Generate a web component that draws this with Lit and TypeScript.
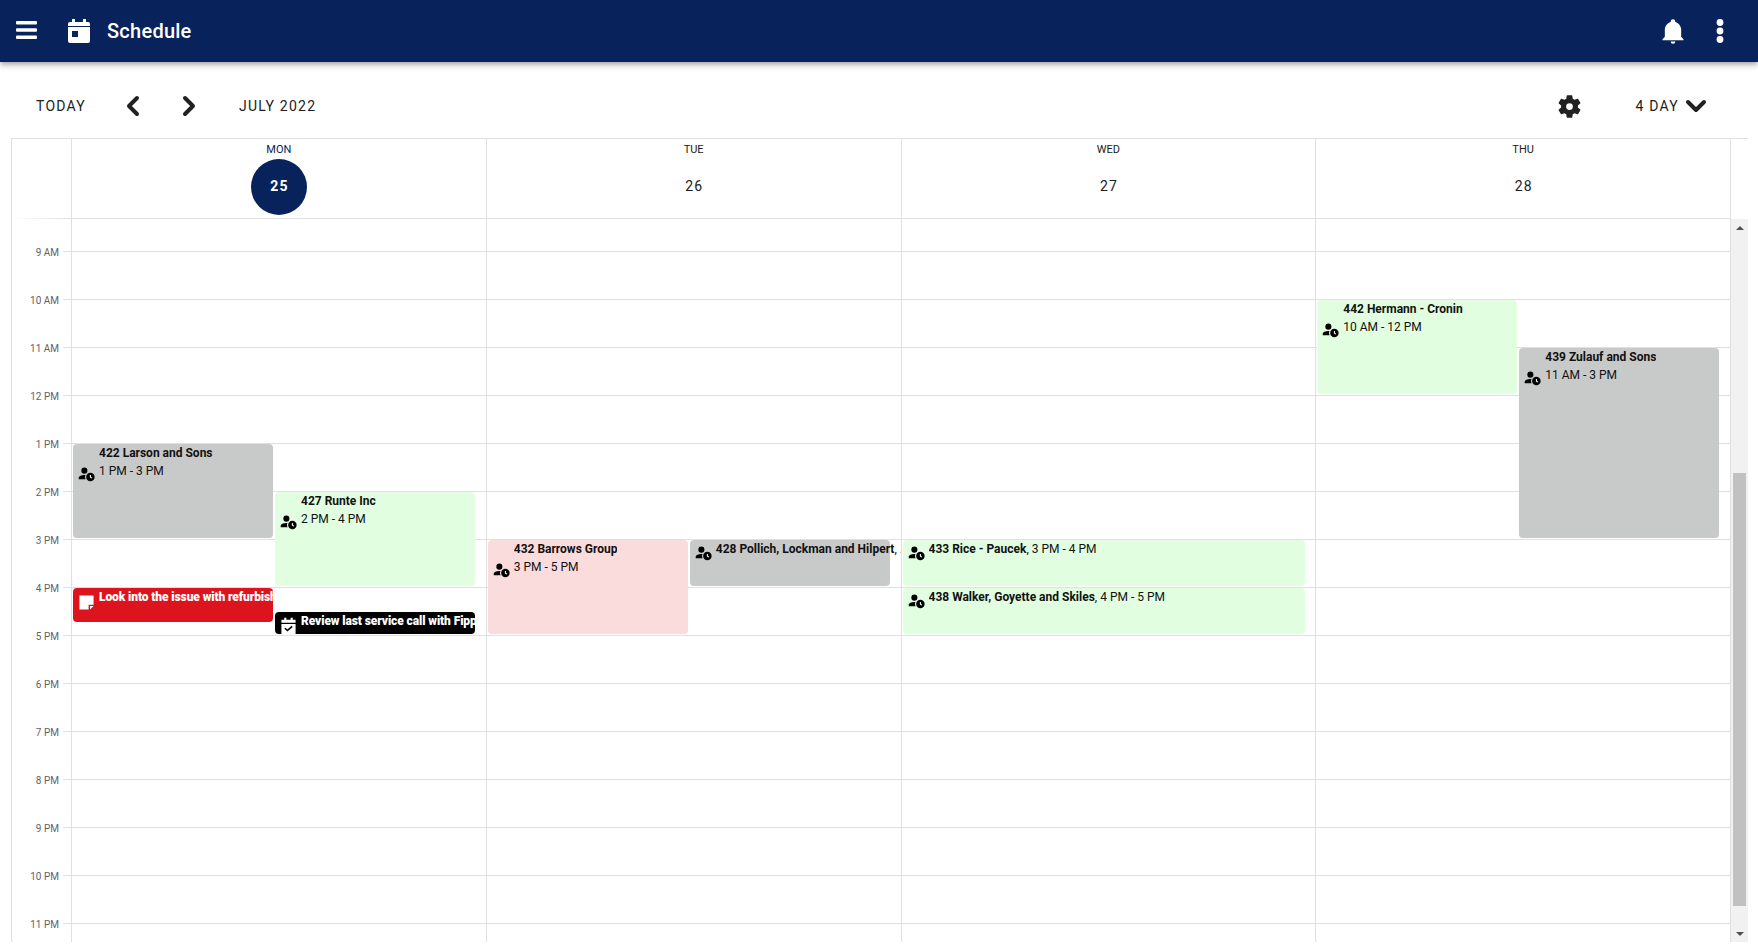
import { LitElement, html, css, svg } from "lit";
import { customElement } from "lit/decorators.js";

const ICONS = {
  person: svg`<circle cx="9" cy="8" r="4.3"/><path d="M1,20V18C1.06,16.86 1.84,15.93 3.34,15.18C4.84,14.43 6.72,14.04 9,14C9.57,14 10.11,14.05 10.63,14.1C9.8,15.5 9.6,18 10.67,20Z"/><circle cx="17.5" cy="17" r="6"/><path d="M17.5,14V17.2L19.8,18.5" fill="none" stroke="#fff" stroke-width="1.5"/>`,
  note: svg`<path d="M2,2H22V15H15V22H2ZM17,17H22L17,22Z"/>`,
  check: svg`<path d="M6,1H9V4H15V1H18V4H22V8H2V4H6ZM2,10H22V24H2ZM10.5,20.5L18,14L16.3,12.5L10.5,17.5L7.7,15L6,16.5Z" fill-rule="evenodd"/>`,
};

type Ev = { col: number; lane: number; top: number; h: number; kind: string; icon: keyof typeof ICONS; title: string; time?: string; inline?: boolean; wide?: boolean };

const EVENTS: Ev[] = [
  { col: 0, lane: 0, top: 225, h: 94, kind: "grey", icon: "person", title: "422 Larson and Sons", time: "1 PM - 3 PM" },
  { col: 0, lane: 1, top: 273, h: 94, kind: "green", icon: "person", title: "427 Runte Inc", time: "2 PM - 4 PM" },
  { col: 0, lane: 0, top: 369, h: 34, kind: "red", icon: "note", title: "Look into the issue with refurbished unit" },
  { col: 0, lane: 1, top: 393, h: 22, kind: "black", icon: "check", title: "Review last service call with Fippin and Sons" },
  { col: 1, lane: 0, top: 321, h: 94, kind: "pink", icon: "person", title: "432 Barrows Group", time: "3 PM - 5 PM" },
  { col: 1, lane: 1, top: 321, h: 46, kind: "grey spill", icon: "person", title: "428 Pollich, Lockman and Hilpert", time: "...", inline: true },
  { col: 2, lane: 0, top: 321, h: 46, kind: "green", icon: "person", title: "433 Rice - Paucek", time: "3 PM - 4 PM", inline: true, wide: true },
  { col: 2, lane: 0, top: 369, h: 46, kind: "green", icon: "person", title: "438 Walker, Goyette and Skiles", time: "4 PM - 5 PM", inline: true, wide: true },
  { col: 3, lane: 0, top: 81, h: 94, kind: "green", icon: "person", title: "442 Hermann - Cronin", time: "10 AM - 12 PM" },
  { col: 3, lane: 1, top: 129, h: 190, kind: "grey", icon: "person", title: "439 Zulauf and Sons", time: "11 AM - 3 PM" },
];

const HOURS = ["9 AM", "10 AM", "11 AM", "12 PM", "1 PM", "2 PM", "3 PM", "4 PM", "5 PM", "6 PM", "7 PM", "8 PM", "9 PM", "10 PM", "11 PM"];
const DAYS = [["MON", "25"], ["TUE", "26"], ["WED", "27"], ["THU", "28"]];

@customElement("app-root")
export class AppRoot extends LitElement {
  static styles = css`
    :host { display: flex; flex-direction: column; height: 951px; overflow: hidden; background: #fff; font-family: Roboto, "Liberation Sans", sans-serif; color: #212121; }
    svg { display: block; fill: currentColor; }
    .appbar { flex: none; height: 62px; background: #08235b; color: #fff; display: flex; align-items: center; padding: 0 0 0 16px; box-shadow: 0 2px 4px -1px rgba(0,0,0,.2), 0 4px 5px rgba(0,0,0,.14), 0 1px 10px rgba(0,0,0,.12); position: relative; z-index: 2; }
    .burger { margin-top: -2px; }
    .title { font-size: 20px; font-weight: 500; letter-spacing: .25px; margin-left: 17px; line-height: 24px; margin-top: -1px; }
    .cal-ic { margin-left: 31px; }
    .spacer { flex: 1; }
    .bell { margin-right: 29px; }
    .dots { margin-right: 34px; }
    .toolbar { flex: none; height: 76px; box-sizing: border-box; padding: 12px 0 0 36px; display: flex; align-items: center; font-size: 14px; letter-spacing: 1.25px; }
    .toolbar .prev { margin-left: 39px; }
    .toolbar .next { margin-left: 40px; }
    .toolbar .month { margin-left: 42px; }
    .toolbar .gear { margin-right: 52px; }
    .toolbar .view { margin-right: 6px; }
    .toolbar .down { margin-right: 51px; }
    .calendar { flex: none; height: 803px; margin: 0 10px 0 11px; border-top: 1px solid #e0e0e0; display: flex; flex-direction: column; }
    .head { flex: none; height: 80px; display: flex; }
    .gutter { flex: none; width: 61px; box-sizing: border-box; border-left: 1px solid #e0e0e0; border-right: 1px solid #e0e0e0; }
    .head .gutter { background: linear-gradient(90deg, #fff, #e0e0e0) bottom / 100% 1px no-repeat; }
    .hcol { flex: 1; min-width: 0; box-sizing: border-box; border-right: 1px solid #e0e0e0; border-bottom: 1px solid #e0e0e0; display: flex; flex-direction: column; align-items: center; }
    .wd { font-size: 11px; line-height: 12px; margin-top: 5px; color: #212121; }
    .today .wd { color: #08235b; }
    .num { width: 56px; height: 56px; box-sizing: border-box; padding: 0 0 2px 1.25px; margin-top: 3px; border-radius: 50%; display: flex; align-items: center; justify-content: center; font-size: 14px; letter-spacing: 1.25px; line-height: 20px; }
    .today .num { background: #08235b; color: #fff; font-weight: 700; }
    .sb-pad { flex: none; width: 17px; }
    .body { flex: 1; min-height: 0; display: flex; }
    .gut-body { padding-top: 32px; overflow: hidden; }
    .label { display: flow-root; height: 48px; position: relative; font-size: 10px; color: #5f6368; line-height: 12px; }
    .label span { display: block; text-align: right; padding-right: 12px; margin-top: -4px; }
    .label::after { content: ""; position: absolute; right: 0; top: 0; width: 8px; height: 1px; background: #e0e0e0; }
    .col { flex: 1; min-width: 0; box-sizing: border-box; border-right: 1px solid #e0e0e0; position: relative; overflow: hidden; padding-top: 32px; }
    .line { height: 48px; box-sizing: border-box; border-top: 1px solid #e0e0e0; }
    .event { position: absolute; box-sizing: border-box; border-radius: 4px; display: flex; font-size: 12px; line-height: 18px; padding-left: 5px; overflow: hidden; color: #111; white-space: nowrap; }
    .event.spill { overflow: visible; }
    .grey { background: #c8c9c9; }
    .green { background: #e1ffe0; }
    .pink { background: #fbdcdd; }
    .red { background: #dd141d; color: #fff; }
    .black { background: #000; color: #fff; }
    .ev-ic { flex: none; width: 17px; height: 17px; margin-right: 4px; margin-top: 4px; color: #000; }
    .red .ev-ic, .black .ev-ic { color: #fff; }
    .red .ev-ic { margin-top: 6px; }
    .black .ev-ic { margin-top: 5px; }
    .two .ev-ic { margin-top: 21px; }
    .txt { min-width: 0; overflow: hidden; }
    .spill .txt { overflow: visible; }
    .t { font-weight: 700; }
    .red .t, .black .t { font-weight: 900; letter-spacing: -0.1px; }
    .scrollbar { flex: none; width: 17px; background: #f1f1f1; display: flex; flex-direction: column; align-items: center; box-sizing: border-box; padding: 0 2px; }
    .arrow { flex: none; height: 17px; display: flex; align-items: center; justify-content: center; color: #505050; }
    .track { flex: 1; align-self: stretch; }
    .thumb { margin-top: 237px; height: 433px; background: #c1c1c1; }
  `;

  private renderEvent(e: Ev) {
    const left = e.lane ? 203 : 1;
    const width = e.wide ? 402 : 200;
    const style = `left:${left}px;width:${width}px;top:${e.top}px;height:${e.h}px`;
    const two = e.time && !e.inline;
    return html`<div class="event ${e.kind} ${two ? "two" : ""}" style=${style}>
      <svg class="ev-ic" viewBox="0 0 24 24">${ICONS[e.icon]}</svg>
      <div class="txt">
        ${e.inline
          ? html`<span class="t">${e.title}</span>, ${e.time}`
          : html`<div class="t">${e.title}</div>${e.time ? html`<div>${e.time}</div>` : ""}`}
      </div>
    </div>`;
  }

  render() {
    return html`
      <header class="appbar">
        <svg class="burger" width="21" height="18" viewBox="0 0 21 18"><rect x="0" y="0" width="21" height="3.6" rx="1"/><rect x="0" y="7.2" width="21" height="3.6" rx="1"/><rect x="0" y="14.4" width="21" height="3.6" rx="1"/></svg>
        <svg class="cal-ic" width="22" height="24" viewBox="0 0 22 24"><path fill-rule="evenodd" d="M4,0H7V3H15V0H18V3H20A2,2 0 0 1 22,5V7H0V5A2,2 0 0 1 2,3H4ZM0,8H22V22A2,2 0 0 1 20,24H2A2,2 0 0 1 0,22ZM4,12V18H10V12Z"/></svg>
        <div class="title">Schedule</div>
        <div class="spacer"></div>
        <svg class="bell" width="28" height="28" viewBox="0 0 24 24"><path d="M21,19V20H3V19L5,17V11C5,7.9 7.03,5.17 10,4.29C10,4.19 10,4.1 10,4A2,2 0 0,1 12,2A2,2 0 0,1 14,4C14,4.1 14,4.19 14,4.29C16.97,5.17 19,7.9 19,11V17L21,19M14,21A2,2 0 0,1 12,23A2,2 0 0,1 10,21"/></svg>
        <svg class="dots" width="8" height="24" viewBox="0 0 8 24"><circle cx="4" cy="3.5" r="3.4"/><circle cx="4" cy="12" r="3.4"/><circle cx="4" cy="20.5" r="3.4"/></svg>
      </header>
      <div class="toolbar">
        <span>TODAY</span>
        <svg class="prev" width="16" height="22" viewBox="0 0 16 22"><path d="M12,3L4,11L12,19" fill="none" stroke="currentColor" stroke-width="4" stroke-linecap="round" stroke-linejoin="round"/></svg>
        <svg class="next" width="16" height="22" viewBox="0 0 16 22"><path d="M4,3L12,11L4,19" fill="none" stroke="currentColor" stroke-width="4" stroke-linecap="round" stroke-linejoin="round"/></svg>
        <span class="month">JULY 2022</span>
        <div class="spacer"></div>
        <svg class="gear" width="27" height="27" viewBox="0 0 24 24"><path d="M12,15A3,3 0 0,1 9,12A3,3 0 0,1 12,9A3,3 0 0,1 15,12A3,3 0 0,1 12,15M19.43,12.97C19.47,12.65 19.5,12.33 19.5,12C19.5,11.67 19.47,11.34 19.43,11L21.54,9.37C21.73,9.22 21.78,8.95 21.66,8.73L19.66,5.27C19.54,5.05 19.27,4.96 19.05,5.05L16.56,6.05C16.04,5.66 15.5,5.32 14.87,5.07L14.5,2.42C14.46,2.18 14.25,2 14,2H10C9.75,2 9.54,2.18 9.5,2.42L9.13,5.07C8.5,5.32 7.96,5.66 7.44,6.05L4.95,5.05C4.73,4.96 4.46,5.05 4.34,5.27L2.34,8.73C2.21,8.95 2.27,9.22 2.46,9.37L4.57,11C4.53,11.34 4.5,11.67 4.5,12C4.5,12.33 4.53,12.65 4.57,12.97L2.46,14.63C2.27,14.78 2.21,15.05 2.34,15.27L4.34,18.73C4.46,18.95 4.73,19.03 4.95,18.95L7.44,17.94C7.96,18.34 8.5,18.68 9.13,18.93L9.5,21.58C9.54,21.82 9.75,22 10,22H14C14.25,22 14.46,21.82 14.5,21.58L14.87,18.93C15.5,18.67 16.04,18.34 16.56,17.94L19.05,18.95C19.27,19.03 19.54,18.95 19.66,18.73L21.66,15.27C21.78,15.05 21.73,14.78 21.54,14.63L19.43,12.97Z"/></svg>
        <span class="view">4 DAY</span>
        <svg class="down" width="22" height="16" viewBox="0 0 22 16"><path d="M3,4L11,12L19,4" fill="none" stroke="currentColor" stroke-width="4" stroke-linecap="round" stroke-linejoin="round"/></svg>
      </div>
      <section class="calendar">
        <div class="head">
          <div class="gutter"></div>
          ${DAYS.map(([w, n], i) => html`<div class="hcol ${i === 0 ? "today" : ""}"><div class="wd">${w}</div><div class="num">${n}</div></div>`)}
          <div class="sb-pad"></div>
        </div>
        <div class="body">
          <div class="gutter gut-body">
            ${HOURS.map((h) => html`<div class="label"><span>${h}</span></div>`)}
          </div>
          ${DAYS.map((_, i) => html`<div class="col">
            ${HOURS.map(() => html`<div class="line"></div>`)}
            ${EVENTS.filter((e) => e.col === i).map((e) => this.renderEvent(e))}
          </div>`)}
          <div class="scrollbar">
            <div class="arrow"><svg width="8" height="4" viewBox="0 0 8 4"><path d="M4,0L8,4H0Z"/></svg></div>
            <div class="track"><div class="thumb"></div></div>
            <div class="arrow"><svg width="8" height="4" viewBox="0 0 8 4"><path d="M0,0H8L4,4Z"/></svg></div>
          </div>
        </div>
      </section>
    `;
  }
}
